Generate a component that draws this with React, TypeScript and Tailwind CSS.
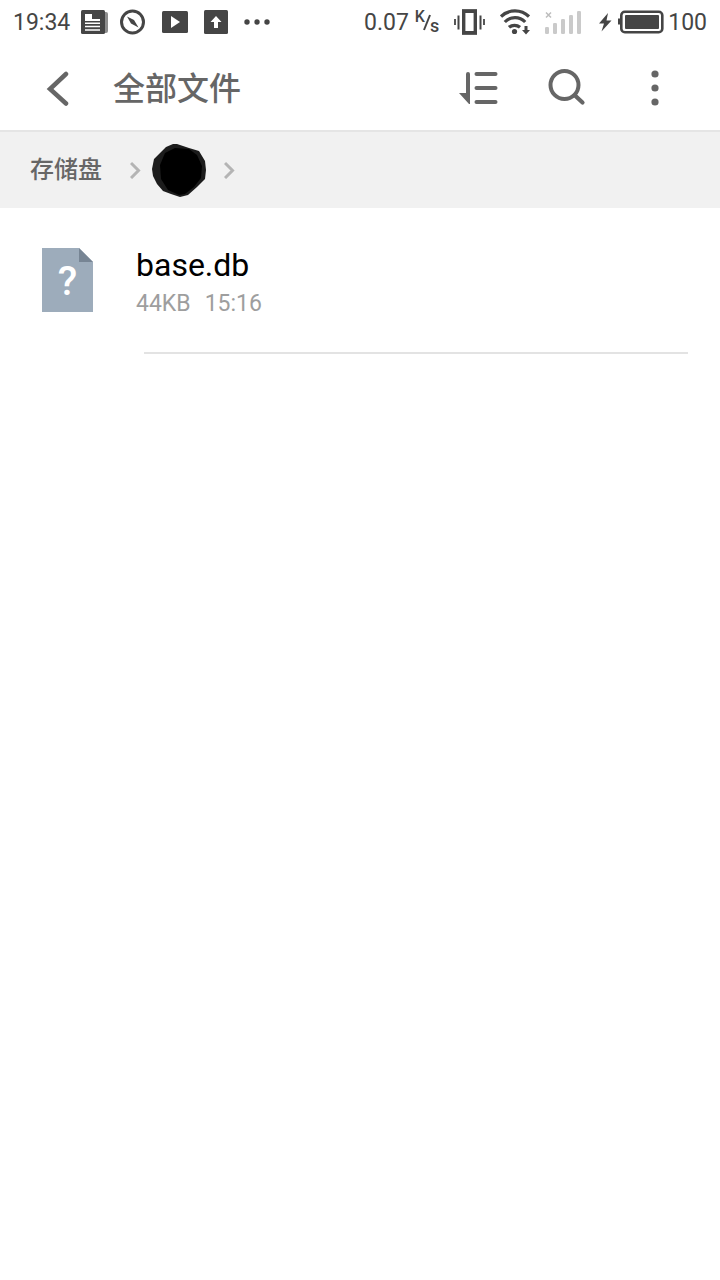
import type { ReactNode } from "react";

function NewsIcon() {
  return (
    <svg width="27" height="24" viewBox="0 0 27 24" fill="none">
      <path d="M23 2h2a2 2 0 0 1 2 2v17a2 2 0 0 1-2 2h-2z" fill="#8d8d8d" />
      <rect width="24" height="24" rx="1.5" fill="#454545" />
      <path d="M4 4h7v5h8v2H4z" fill="#fff" />
      <path d="M4 13.2h15M4 16.6h15M4 20h15" stroke="#fff" strokeWidth="1.5" />
    </svg>
  );
}

function CompassIcon() {
  return (
    <svg width="26" height="26" viewBox="0 0 26 26" fill="none">
      <circle cx="12.5" cy="13" r="11" stroke="#454545" strokeWidth="3" />
      <path d="M7 7.5l7 3.5 4.5 7.5-7.5-4z" fill="#454545" />
    </svg>
  );
}

function PlayIcon() {
  return (
    <svg width="26" height="22" viewBox="0 0 26 22">
      <rect width="26" height="22" rx="1.5" fill="#454545" />
      <path d="M9 5v12l9-6z" fill="#fff" />
    </svg>
  );
}

function UploadIcon() {
  return (
    <svg width="24" height="24" viewBox="0 0 24 24">
      <rect width="24" height="24" rx="1.5" fill="#454545" />
      <path d="M12 6l5.5 6H14v6h-4v-6H6.5z" fill="#fff" />
    </svg>
  );
}

function DotsIcon() {
  return (
    <svg width="26" height="6" viewBox="0 0 26 6" fill="#454545">
      <circle cx="3" cy="3" r="2.7" />
      <circle cx="13" cy="3" r="2.7" />
      <circle cx="23" cy="3" r="2.7" />
    </svg>
  );
}

function VibrateIcon() {
  return (
    <svg width="31" height="26" viewBox="0 0 31 26" fill="none" stroke="#454545">
      <rect x="9.7" y="2" width="11.6" height="22" strokeWidth="3.4" />
      <path d="M8 2.3h15M8 23.7h15" strokeWidth="3.6" />
      <path d="M1 10v6M30 10v6" strokeWidth="1.8" />
      <path d="M4.5 6.5v14M26.5 6.5v14" strokeWidth="2" />
    </svg>
  );
}

function WifiIcon() {
  return (
    <svg width="30" height="26" viewBox="0 0 30 26" fill="none" stroke="#454545">
      <path d="M1 7.6a20 20 0 0 1 28 0" strokeWidth="3.2" />
      <path d="M4.8 13a14 14 0 0 1 20.4 0" strokeWidth="3.2" />
      <path d="M9 18.3a8.5 8.5 0 0 1 11 0" strokeWidth="3.2" />
      <circle cx="14.5" cy="22.5" r="2.6" fill="#454545" stroke="none" />
      <path d="M24.5 17h3v4H30l-4 4.5-4-4.5h2.5z" fill="#454545" stroke="none" />
    </svg>
  );
}

function SignalIcon() {
  return (
    <svg width="37" height="26" viewBox="0 0 37 26" fill="#cacaca">
      <path d="M1 3.5l5 5M6 3.5l-5 5" stroke="#bdbdbd" strokeWidth="1.5" />
      <rect x="0" y="18" width="4" height="7" rx="1.2" />
      <rect x="8" y="14" width="4" height="11" rx="1.2" />
      <rect x="16" y="10" width="4" height="15" rx="1.2" />
      <rect x="24" y="6" width="4" height="19" rx="1.2" />
      <rect x="32" y="2" width="4" height="23" rx="1.2" />
    </svg>
  );
}

function BatteryIcon() {
  return (
    <svg width="65" height="24" viewBox="0 0 65 24" fill="none">
      <path d="M9 3L0 13.5h5L2.5 21.5l10-11h-5z" fill="#454545" />
      <rect x="22.3" y="1.8" width="41" height="20.4" rx="3.5" stroke="#454545" strokeWidth="2.6" />
      <rect x="26" y="5" width="34" height="14" rx="1" fill="#454545" />
      <path d="M23 8.5h-4v6h4z" fill="#454545" />
    </svg>
  );
}

function StatusBar() {
  return (
    <div className="flex h-11 items-center justify-between px-[13px] text-[23px] text-[#454545]">
      <div className="flex items-center">
        <span className="w-[68px] pt-0.5">19:34</span>
        <NewsIcon />
        <div className="ml-3 flex items-center gap-4">
          <CompassIcon />
          <PlayIcon />
          <UploadIcon />
          <DotsIcon />
        </div>
      </div>
      <div className="flex items-center">
        <span className="pt-0.5">0.07</span>
        <span className="ml-1.5 flex items-center leading-none font-medium">
          <span className="pb-2.5 text-base leading-none">K</span>
          <svg width="5" height="18" viewBox="0 0 5 18" fill="none" className="overflow-visible">
            <path d="M-1 17L5 2" stroke="#454545" strokeWidth="2" />
          </svg>
          <span className="pt-2 text-lg leading-none">s</span>
        </span>
        <div className="ml-[15px] flex items-center gap-[15px]">
          <VibrateIcon />
          <WifiIcon />
          <SignalIcon />
          <div className="ml-0.5">
            <BatteryIcon />
          </div>
        </div>
        <span className="ml-1 pt-0.5">100</span>
      </div>
    </div>
  );
}

function IconButton({ label, children }: { label: string; children: ReactNode }) {
  return (
    <button
      type="button"
      aria-label={label}
      className="flex size-12 items-center justify-center text-[#666666]"
    >
      {children}
    </button>
  );
}

function Toolbar() {
  return (
    <header className="flex h-22 items-center justify-between border-b-2 border-[#e5e5e5] pt-0.5 pr-[41px] pl-[33px]">
      <div className="flex items-center gap-8">
        <IconButton label="返回">
          <svg width="24" height="36" viewBox="0 0 24 36" fill="none">
            <path
              d="M21 4L5 19l16 14.5"
              stroke="currentColor"
              strokeWidth="4.5"
              strokeLinecap="round"
            />
          </svg>
        </IconButton>
        <h1 className="pt-0.5 text-[32px] leading-10 font-medium text-[#666666]">全部文件</h1>
      </div>
      <div className="flex items-center gap-10">
        <IconButton label="排序">
          <svg width="40" height="34" viewBox="0 0 40 34" fill="currentColor">
            <path d="M7 3a2 2 0 0 1 4 0v30h-1L0 22h7z" />
            <rect x="15.5" y="1" width="23" height="4" rx="2" />
            <rect x="15.5" y="15" width="23" height="4" rx="2" />
            <rect x="15.5" y="29" width="23" height="4" rx="2" />
          </svg>
        </IconButton>
        <IconButton label="搜索">
          <svg width="38" height="38" viewBox="0 0 38 38" fill="none" stroke="currentColor">
            <circle cx="16.5" cy="16" r="14" strokeWidth="4" />
            <path d="M27 26.5l7.5 7" strokeWidth="4.2" strokeLinecap="round" />
          </svg>
        </IconButton>
        <IconButton label="更多">
          <svg width="8" height="36" viewBox="0 0 8 36" fill="currentColor">
            <circle cx="4" cy="4" r="3.6" />
            <circle cx="4" cy="18" r="3.6" />
            <circle cx="4" cy="32" r="3.6" />
          </svg>
        </IconButton>
      </div>
    </header>
  );
}

function Chevron() {
  return (
    <svg width="12" height="18" viewBox="0 0 12 18" fill="none">
      <path d="M1 2l7.5 7.5L1 17" stroke="#b4b4b4" strokeWidth="3" />
    </svg>
  );
}

function Breadcrumb() {
  return (
    <nav className="flex h-19 items-center bg-[#f1f1f1] pl-[30px]">
      <a href="#" className="mr-7 text-2xl font-medium text-[#666666]">
        存储盘
      </a>
      <Chevron />
      <svg width="54" height="54" viewBox="0 0 54 54" className="mr-[18px] ml-[10px]">
        <path
          d="M14 4l7-3 4 0 12 4 10 3 6 10 1 9-1 9-8 8-9 8-8 2-9-3-8-3-6-7-4-8-1-7 2-10z"
          fill="#1c1c1c"
        />
        <path d="M13 10l10-5 14 1 8 6 5 11-1 12-7 9-9 7-6 1-11-5-7-11-1-14z" fill="#000" />
      </svg>
      <Chevron />
    </nav>
  );
}

function FileIcon() {
  return (
    <div className="relative mt-1 flex h-16 w-[51px] items-center justify-center">
      <svg viewBox="0 0 51 64" className="absolute inset-0 size-full">
        <path d="M0 0h37l14 14v50H0z" fill="#9dacbb" />
        <path d="M37 0l14 14H37z" fill="#778594" />
      </svg>
      <span className="relative pt-1 text-[40px] leading-none font-medium text-white">?</span>
    </div>
  );
}

const files = [{ name: "base.db", size: "44KB", time: "15:16" }];

export default function App() {
  return (
    <div className="min-h-screen bg-white font-[Roboto,'Noto_Sans_CJK_SC',sans-serif]">
      <StatusBar />
      <Toolbar />
      <Breadcrumb />
      <ul>
        {files.map((file) => (
          <li key={file.name}>
            <a href="#" className="flex items-start gap-[43px] pt-9 pr-8 pb-[30px] pl-[42px]">
              <FileIcon />
              <div>
                <p className="text-[32px] leading-[42px] text-black">{file.name}</p>
                <p className="flex gap-3.5 text-[23px] leading-9 text-[#9e9e9e]">
                  <span>{file.size}</span>
                  <span>{file.time}</span>
                </p>
              </div>
            </a>
            <div className="mr-8 ml-36 h-0.5 bg-[#e3e3e3]" />
          </li>
        ))}
      </ul>
    </div>
  );
}
